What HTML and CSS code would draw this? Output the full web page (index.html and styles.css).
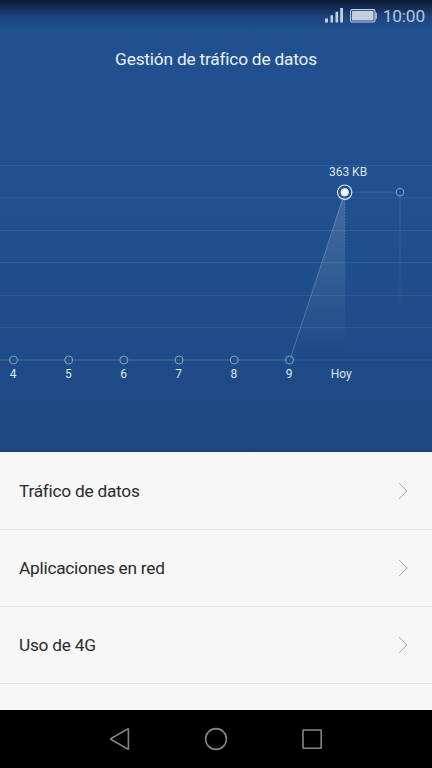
FILE: index.html
```html
<!DOCTYPE html>
<html lang="es">
<head>
    <meta charset="UTF-8">
    <meta name="viewport" content="width=device-width, initial-scale=1.0">
    <title>Gestión de tráfico de datos</title>
    <link rel="stylesheet" href="styles.css">
</head>
<body>

    <div class="top">
        <div class="status-bar">
            <svg class="signal" width="18" height="15" viewBox="0 0 18 15">
                <path d="M0 10.5h3v4H0zM5.5 7.2h2.5v7.3H5.5zM10.5 3.7h2.6v10.8h-2.6zM15.2 0h2.8v14.5h-2.8z"/>
            </svg>
            <svg class="battery" width="27" height="14" viewBox="0 0 27 14">
                <rect class="case" x="0.6" y="0.6" width="24.4" height="12.4" rx="1.6"/>
                <rect x="2" y="2" width="21.6" height="9.6" rx="0.6"/>
                <rect x="25.4" y="3.8" width="1.4" height="6"/>
            </svg>
            <span class="clock">10:00</span>
        </div>

        <h1>Gestión de tráfico de datos</h1>

        <svg class="chart" width="432" height="240" viewBox="0 150 432 240">
            <defs>
                <linearGradient id="area" x1="0" y1="0" x2="0" y2="1">
                    <stop offset="0" stop-color="#fff" stop-opacity="0.16"/>
                    <stop offset="0.45" stop-color="#fff" stop-opacity="0.09"/>
                    <stop offset="0.95" stop-color="#fff" stop-opacity="0"/>
                </linearGradient>
                <linearGradient id="fade" gradientUnits="userSpaceOnUse" x1="0" y1="196" x2="0" y2="345">
                    <stop offset="0" stop-color="#fff" stop-opacity="0.17"/>
                    <stop offset="1" stop-color="#fff" stop-opacity="0"/>
                </linearGradient>
            </defs>

            <path class="grid" d="M0 165.5h432M0 198h432M0 230.5h432M0 262.5h432M0 295.5h432M0 327.5h432M0 360h432"/>

            <!-- usage line -->
            <path fill="url(#area)" d="M344.7 192L290 360h54.7z"/>
            <path class="base" d="M0 360h9.5M18 360h46.5M73 360h46.5M128 360h47M183.5 360h46M238 360h47.5"/>
            <path class="slope" d="M291.2 356L342.3 200"/>
            <path class="next" d="M352.5 192.2h43"/>
            <path class="drop" d="M344.7 200v145M400 197v148"/>

            <g class="dots">
                <circle cx="13.5" cy="360" r="4"/>
                <circle cx="68.7" cy="360" r="4"/>
                <circle cx="123.9" cy="360" r="4"/>
                <circle cx="179.1" cy="360" r="4"/>
                <circle cx="234.3" cy="360" r="4"/>
                <circle cx="289.5" cy="360" r="4"/>
                <circle cx="400" cy="192.2" r="3.8"/>
            </g>
            <circle class="ring" cx="344.7" cy="192.2" r="7.2"/>
            <circle class="now" cx="344.7" cy="192.2" r="4"/>

            <g class="labels">
                <text x="348" y="176.3">363 KB</text>
                <text x="13" y="378">4</text>
                <text x="68.3" y="378">5</text>
                <text x="123.5" y="378">6</text>
                <text x="178.7" y="378">7</text>
                <text x="233.8" y="378">8</text>
                <text x="289" y="378">9</text>
                <text x="341.3" y="378">Hoy</text>
            </g>
        </svg>
    </div>

    <ul class="menu">
        <li>
            <span>Tráfico de datos</span>
            <svg width="10" height="18" viewBox="0 0 10 18"><path d="M1 1l8 8-8 8"/></svg>
        </li>
        <li>
            <span>Aplicaciones en red</span>
            <svg width="10" height="18" viewBox="0 0 10 18"><path d="M1 1l8 8-8 8"/></svg>
        </li>
        <li>
            <span>Uso de 4G</span>
            <svg width="10" height="18" viewBox="0 0 10 18"><path d="M1 1l8 8-8 8"/></svg>
        </li>
    </ul>

    <div class="nav-bar">
        <svg width="24" height="24" viewBox="0 0 24 24"><path d="M20.4 2.2v19.6q0 .6-.6.3L3.1 12.5q-.8-.5 0-1L19.8 1.9q.6-.3.6.3z"/></svg>
        <svg width="24" height="24" viewBox="0 0 24 24"><circle cx="12" cy="12" r="10.4"/></svg>
        <svg width="24" height="24" viewBox="0 0 24 24"><rect x="3" y="3" width="18.2" height="18.2" rx="0.5"/></svg>
    </div>

</body>
</html>
```

FILE: styles.css
```css
*{
    margin: 0;
    padding: 0;
    box-sizing: border-box;
}
body{
    width: 432px;
    height: 768px;
    overflow: hidden;
    display: flex;
    flex-direction: column;
    font-family: Roboto, "Liberation Sans", sans-serif;
    background-color: #f7f7f7;
}

/* blue header with the chart */
.top{
    height: 452px;
    background: linear-gradient(#0c1a33 0, #122b52 7px, #1c4580 17px, #20508f 30px, #20508f 190px, #1e4c88 350px, #1d4881 447px, #1b4274 452px);
}
.status-bar{
    height: 31px;
    padding-right: 7px;
    display: flex;
    justify-content: flex-end;
    align-items: center;
    fill: #c6cfdf;
}
.battery{
    margin: 0 6px 0 7px;
}
.case{
    fill: none;
    stroke: #c6cfdf;
    stroke-width: 1.1;
}
.clock{
    color: #b9c6da;
    font-size: 17.3px;
    line-height: 32px;
    letter-spacing: -0.15px;
}
h1{
    height: 119px;
    padding-top: 16px;
    color: #e9f1fa;
    font-size: 17.3px;
    font-weight: 400;
    line-height: 24px;
    letter-spacing: -0.2px;
    text-align: center;
}
.chart{
    display: block;
}
.grid{
    stroke: rgba(255, 255, 255, 0.08);
}
.base{
    stroke: rgba(255, 255, 255, 0.09);
    stroke-width: 1.5;
}
.slope{
    stroke: rgba(255, 255, 255, 0.28);
    stroke-width: 0.8;
}
.next{
    stroke: rgba(255, 255, 255, 0.13);
}
.drop{
    stroke: url(#fade);
    stroke-dasharray: 2 1;
}
.dots{
    fill: none;
    stroke: #86a2c8;
}
.ring{
    fill: none;
    stroke: #dce6f3;
    stroke-width: 1.2;
}
.now{
    fill: #f1f5fc;
}
.labels{
    fill: #dbe6f4;
    font-size: 12px;
    text-anchor: middle;
}

/* options */
.menu{
    flex: 1;
    border-top: 1px solid #eef1f5;
    list-style: none;
}
.menu li{
    height: 77px;
    padding: 0 24px 0 19px;
    display: flex;
    justify-content: space-between;
    align-items: center;
    border-bottom: 1px solid #e2e2e2;
    color: #2b2b2b;
    font-size: 17.3px;
    letter-spacing: -0.25px;
}
.menu svg{
    fill: none;
    stroke: #aaa;
    stroke-width: 1;
}

.nav-bar{
    height: 58px;
    display: flex;
    justify-content: center;
    align-items: center;
    gap: 72px;
    background-color: #000;
}
.nav-bar svg{
    fill: none;
    stroke: #858585;
    stroke-width: 1.6;
}
```
